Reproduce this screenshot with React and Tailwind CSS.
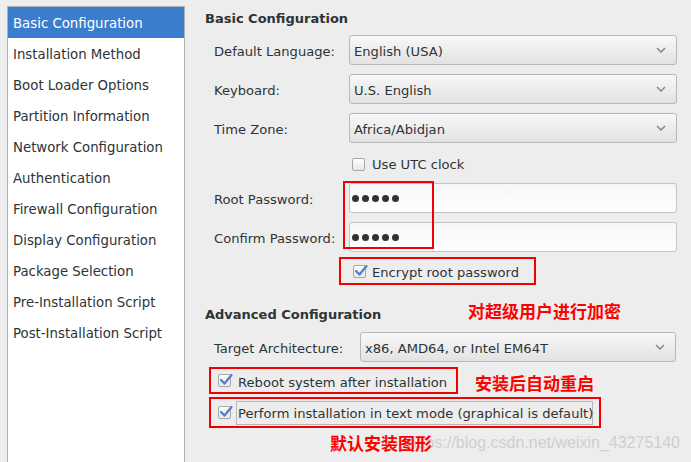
import React from 'react';

const menu = [
  'Basic Configuration',
  'Installation Method',
  'Boot Loader Options',
  'Partition Information',
  'Network Configuration',
  'Authentication',
  'Firewall Configuration',
  'Display Configuration',
  'Package Selection',
  'Pre-Installation Script',
  'Post-Installation Script',
];

function Chevron() {
  return (
    <svg width="10" height="6" viewBox="0 0 10 6" className="mr-[10px]">
      <polyline points="1,1 5,5 9,1" fill="none" stroke="#8a8a8a" strokeWidth="1.6" />
    </svg>
  );
}

function Select({ value, width }) {
  return (
    <div
      className={`flex items-center justify-between h-[30px] ${width} rounded-[3px] border border-[#b8b8b8] bg-gradient-to-b from-[#f8f8f8] to-[#e2e2e2] pl-[4px]`}
    >
      <span className="pt-[3px]">{value}</span>
      <Chevron />
    </div>
  );
}

function CheckBox({ checked }) {
  return (
    <span className="relative inline-block w-[13px] h-[13px] shrink-0 rounded-[2px] border border-[#a8a8a8] bg-gradient-to-b from-white to-[#e8e8e8]">
      {checked && (
        <svg width="14" height="13" viewBox="0 0 14 13" className="absolute left-[0px] top-[-2px]">
          <path d="M2 7 L5.5 10.5 L12.5 2" fill="none" stroke="#4a7fcc" strokeWidth="2.2" strokeLinecap="round" strokeLinejoin="round" />
        </svg>
      )}
    </span>
  );
}

function Password() {
  return (
    <div className="flex items-center gap-[3px] h-[30px] w-[328px] rounded-[3px] border border-[#c4c4c4] bg-gradient-to-b from-[#f6f6f6] to-white pl-[2px] pt-[1px]">
      {[0, 1, 2, 3, 4].map((i) => (
        <span key={i} className="w-[7px] h-[7px] rounded-full bg-[#2e3436]" />
      ))}
    </div>
  );
}

function Row({ label, labelW, children, mt }) {
  return (
    <div className={`flex items-center ${mt}`}>
      <div className={`${labelW} pl-[9px] pt-[3px] whitespace-nowrap`}>{label}</div>
      {children}
    </div>
  );
}

export default function App() {
  return (
    <div className="relative w-[691px] h-[462px] overflow-hidden bg-[#ededed] text-[#2e3436] text-[13.1px] leading-[16px] font-['DejaVu_Sans',sans-serif] flex">
      {/* Sidebar */}
      <div className="ml-[7px] mt-[6px] w-[178px] shrink-0 bg-white border border-b-0 border-[#b0b0b0] text-[13.3px]">
        {menu.map((m, i) => (
          <div
            key={m}
            className={`h-[31px] flex items-center pl-[5px] pt-[2px] whitespace-nowrap ${i === 0 ? 'bg-[#3a7dce] text-white' : ''}`}
          >
            {m}
          </div>
        ))}
      </div>

      {/* Main */}
      <div className="flex-1 pl-[20px] pt-[11px] flex flex-col">
        <div className="font-bold text-[13px] h-[16px]">Basic Configuration</div>

        <Row label="Default Language:" labelW="w-[144px]" mt="mt-[8px]">
          <Select value="English (USA)" width="w-[328px]" />
        </Row>
        <Row label="Keyboard:" labelW="w-[144px]" mt="mt-[9px]">
          <Select value="U.S. English" width="w-[328px]" />
        </Row>
        <Row label="Time Zone:" labelW="w-[144px]" mt="mt-[9px]">
          <Select value="Africa/Abidjan" width="w-[328px]" />
        </Row>

        <div className="flex items-center h-[24px] mt-[9px] pl-[147px] gap-[7px]">
          <CheckBox />
          <span className="pt-[2px]">Use UTC clock</span>
        </div>

        <Row label="Root Password:" labelW="w-[144px]" mt="mt-[7px]">
          <Password />
        </Row>
        <Row label="Confirm Password:" labelW="w-[144px]" mt="mt-[9px]">
          <Password />
        </Row>

        <div className="mt-[5px] ml-[134px] w-[197px] h-[28px] border-2 border-[#f00000] flex items-center pl-[12px] gap-[6px]">
          <CheckBox checked />
          <span className="pt-[4px] whitespace-nowrap">Encrypt root password</span>
        </div>

        <div className="font-bold text-[13px] h-[16px] mt-[22px]">Advanced Configuration</div>

        <Row label="Target Architecture:" labelW="w-[155px]" mt="mt-[9px]">
          <Select value="x86, AMD64, or Intel EM64T" width="w-[316px]" />
        </Row>

        <div className="mt-[5px] ml-[4px] w-[249px] h-[27px] border-2 border-[#f00000] flex items-center pl-[7px] gap-[7px]">
          <CheckBox checked />
          <span className="pt-[5px] whitespace-nowrap">Reboot system after installation</span>
        </div>

        <div className="mt-[3px] ml-[4px] w-[392px] h-[31px] border-2 border-[#f00000] flex items-center pl-[7px] gap-[5px]">
          <CheckBox checked />
          <span className="h-[24px] flex items-center border border-[#b8b8b8] pl-[1px] pt-[3px] w-[357px] whitespace-nowrap">
            Perform installation in text mode (graphical is default)
          </span>
        </div>
      </div>

      {/* Annotations */}
      <div className="absolute left-[343px] top-[181px] w-[91px] h-[68px] border-2 border-[#f00000]" />
      <div className="absolute right-[11px] top-[433px] text-[16px] leading-[20px] text-[#cfcfcf] font-['Liberation_Sans',sans-serif]">
        https://blog.csdn.net/weixin_43275140
      </div>
      <div className="absolute left-[468px] top-[300px] text-[17px] leading-[22px] font-bold text-[#ff0000] font-['Noto_Sans_CJK_SC',sans-serif]">
        对超级用户进行加密
      </div>
      <div className="absolute left-[475px] top-[372px] text-[17px] leading-[22px] font-bold text-[#ff0000] font-['Noto_Sans_CJK_SC',sans-serif]">
        安装后自动重启
      </div>
      <div className="absolute left-[330px] top-[432px] text-[17px] leading-[22px] font-bold text-[#ff0000] font-['Noto_Sans_CJK_SC',sans-serif]">
        默认安装图形
      </div>
    </div>
  );
}
